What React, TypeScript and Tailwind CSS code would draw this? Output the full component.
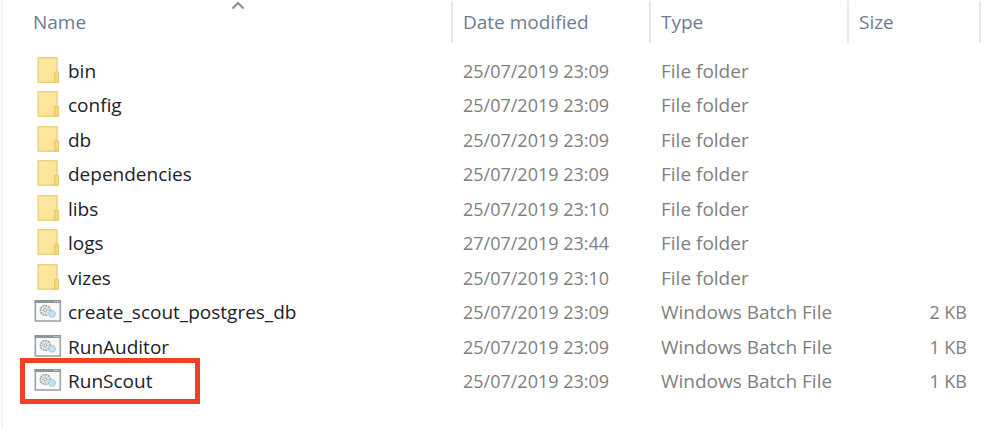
import React from 'react';
import { clsx } from 'clsx';

type FileKind = 'folder' | 'batch';

interface FileEntry {
  name: string;
  modified: string;
  kind: FileKind;
  size?: string;
  highlighted?: boolean;
}

const typeLabels: Record<FileKind, string> = {
  folder: 'File folder',
  batch: 'Windows Batch File',
};

const files: FileEntry[] = [
  { name: 'bin', modified: '25/07/2019 23:09', kind: 'folder' },
  { name: 'config', modified: '25/07/2019 23:09', kind: 'folder' },
  { name: 'db', modified: '25/07/2019 23:09', kind: 'folder' },
  { name: 'dependencies', modified: '25/07/2019 23:09', kind: 'folder' },
  { name: 'libs', modified: '25/07/2019 23:10', kind: 'folder' },
  { name: 'logs', modified: '27/07/2019 23:44', kind: 'folder' },
  { name: 'vizes', modified: '25/07/2019 23:10', kind: 'folder' },
  { name: 'create_scout_postgres_db', modified: '25/07/2019 23:09', kind: 'batch', size: '2 KB' },
  { name: 'RunAuditor', modified: '25/07/2019 23:09', kind: 'batch', size: '1 KB' },
  { name: 'RunScout', modified: '25/07/2019 23:09', kind: 'batch', size: '1 KB', highlighted: true },
];

function FolderIcon() {
  return (
    <svg className="h-7 w-7 shrink-0" viewBox="0 1 28 28" aria-hidden="true">
      <defs>
        <linearGradient id="folder-fill" x1="0" y1="0" x2="1" y2="1">
          <stop offset="0" stopColor="#fbe9a8" />
          <stop offset="1" stopColor="#fce391" />
        </linearGradient>
      </defs>
      <path d="M4.2 1.7H23V26.2H4.2Z" fill="url(#folder-fill)" stroke="#edd27a" strokeWidth="1.5" />
      <path d="M20.8 26.2V17.2Q20.8 16 22 16H23.2Q24.4 16 24.4 17.2V26.2Z" fill="#f8dc85" stroke="#e8c968" strokeWidth="1.3" />
    </svg>
  );
}

function BatchIcon() {
  return (
    <svg className="h-7 w-7 shrink-0" viewBox="0 1 28 28" aria-hidden="true">
      <rect x="1.3" y="3.8" width="25" height="20.2" fill="#f8f9f9" stroke="#9fa4a7" strokeWidth="1.6" />
      <path d="M0.6 3H27V6H0.6Z" fill="#8f9699" />
      <path d="M20 4.5h1.4M22.4 4.5h1.4M24.8 4.5h1" stroke="#d9dddf" strokeWidth="1.2" />
      <circle cx="11.3" cy="13.4" r="4.9" fill="#eceff0" stroke="#a3a8ab" strokeWidth="1.6" strokeDasharray="2.1 0.7" />
      <path d="M11.3 9.2V17.6M7.1 13.4H15.5M8.4 10.5L14.2 16.3M14.2 10.5L8.4 16.3" stroke="#b3b8ba" strokeWidth="0.7" />
      <circle cx="11.3" cy="13.4" r="1.4" fill="#fff" stroke="#a3a8ab" />
      <circle cx="18" cy="16.8" r="3.3" fill="#c3e2f5" stroke="#a6cbe3" strokeWidth="1.3" strokeDasharray="1.8 0.5" />
    </svg>
  );
}

function SortArrow() {
  return (
    <svg className="absolute top-0 left-1/2 h-3 w-6" viewBox="0 0 24 12" fill="none" aria-hidden="true">
      <path d="M5.5 7.5L11 2L16.5 7.5" stroke="#8b8b8b" strokeWidth="2" />
    </svg>
  );
}

export default function App() {
  return (
    <div className="ml-px min-h-screen border-l-2 border-[#f6f6f6] bg-white pt-px pr-[19px] font-['Open_Sans','Noto_Sans',sans-serif] text-[19px] leading-7">
      <table className="w-full table-fixed border-separate border-spacing-0 text-left whitespace-nowrap">
        <colgroup>
          <col />
          <col className="w-[198px]" />
          <col className="w-[198px]" />
          <col className="w-[132px]" />
        </colgroup>
        <thead className="text-[#6d7b93]">
          <tr className="h-[42px]">
            <th aria-sort="ascending" className="relative border-r-2 border-[#e8e8e8] p-0 pl-[30px] font-normal">
              <SortArrow />
              <button type="button">Name</button>
            </th>
            <th className="border-r-2 border-[#e8e8e8] p-0 pl-2.5 font-normal">
              <button type="button">Date modified</button>
            </th>
            <th className="border-r-2 border-[#e8e8e8] p-0 pl-2.5 font-normal">
              <button type="button">Type</button>
            </th>
            <th className="border-r-2 border-[#e8e8e8] p-0 pl-2.5 font-normal">
              <button type="button">Size</button>
            </th>
          </tr>
          <tr className="h-2.5" />
        </thead>
        <tbody className="text-[#808080]">
          {files.map((file) => (
            <tr key={file.name} className="odd:h-[35px] even:h-[34px]">
              <td className="relative p-0 pl-[31px] text-[#22222a]">
                <div className="flex items-center gap-1.5">
                  {file.kind === 'folder' ? <FolderIcon /> : <BatchIcon />}
                  <span>{file.name}</span>
                </div>
                {file.highlighted && (
                  <div className="pointer-events-none absolute -inset-y-1.5 left-[17px] w-[180px] border-5 border-[#ee4126]" />
                )}
              </td>
              <td className="p-0 pl-2.5 text-lg leading-7">{file.modified}</td>
              <td className="p-0 pl-2.5">{typeLabels[file.kind]}</td>
              <td className={clsx('p-0 pr-3.5 text-lg leading-7', file.size && 'text-right')}>{file.size}</td>
            </tr>
          ))}
        </tbody>
      </table>
    </div>
  );
}
